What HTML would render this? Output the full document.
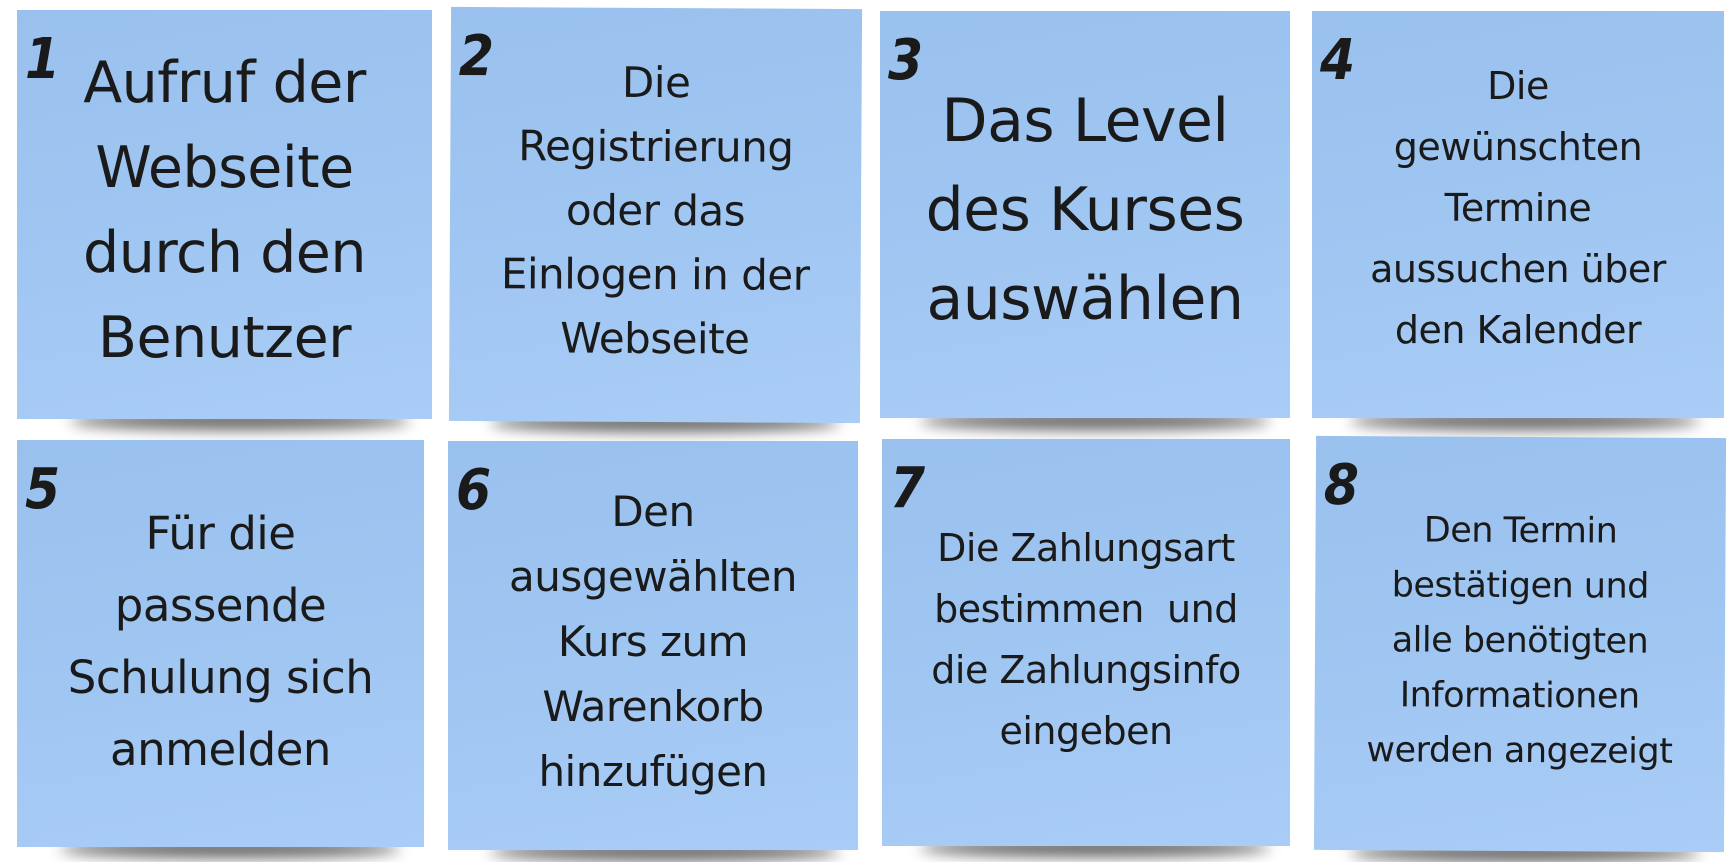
<!DOCTYPE html>
<html><head><meta charset="utf-8"><style>
html,body{margin:0;padding:0;background:#fff;width:1736px;height:862px;overflow:hidden;position:relative;font-family:"DejaVu Sans","Liberation Sans",sans-serif;color:#1a1a1a}
.s{position:absolute;height:18px;border-radius:50%;background:rgba(0,0,0,.6);filter:blur(7px)}
.n{position:absolute;background:linear-gradient(170deg,#9ac1ee 0%,#a0c6f2 55%,#a9cdf6 100%);}
.num{position:absolute;font-family:"DejaVu Sans",sans-serif;font-weight:bold;font-style:italic;font-size:56px;line-height:60px;left:8px;top:20px;transform:scaleX(.9);transform-origin:left}
.t{position:absolute;left:0;right:0;text-align:center;white-space:nowrap;letter-spacing:-0.5px}
</style></head><body>
<div class="s" style="left:70px;top:412px;width:340px"></div>
<div class="s" style="left:490px;top:414px;width:350px"></div>
<div class="s" style="left:920px;top:412px;width:350px"></div>
<div class="s" style="left:1350px;top:412px;width:350px"></div>
<div class="s" style="left:60px;top:840px;width:340px"></div>
<div class="s" style="left:490px;top:843px;width:350px"></div>
<div class="s" style="left:920px;top:839px;width:350px"></div>
<div class="s" style="left:1350px;top:844px;width:350px"></div>

<div class="n" style="left:17px;top:10px;width:415px;height:409px"><div class="num">1</div>
<div class="t" style="top:31px;font-size:57px;line-height:85px;left:0">Aufruf der<br>Webseite<br>durch den<br>Benutzer</div></div>
<div class="n" style="left:450px;top:8px;width:411px;height:414px;transform:rotate(0.3deg)"><div class="num">2</div>
<div class="t" style="top:43px;font-size:42px;line-height:64px;left:0">Die<br>Registrierung<br>oder das<br>Einlogen in der<br>Webseite</div></div>
<div class="n" style="left:880px;top:11px;width:410px;height:407px"><div class="num">3</div>
<div class="t" style="top:66px;font-size:60px;line-height:89px">Das Level<br>des Kurses<br>auswählen</div></div>
<div class="n" style="left:1312px;top:11px;width:412px;height:407px"><div class="num">4</div>
<div class="t" style="top:45px;font-size:38px;line-height:61px">Die<br>gewünschten<br>Termine<br>aussuchen über<br>den Kalender</div></div>
<div class="n" style="left:17px;top:440px;width:407px;height:407px"><div class="num">5</div>
<div class="t" style="top:58px;font-size:45px;line-height:72px">Für die<br>passende<br>Schulung sich<br>anmelden</div></div>
<div class="n" style="left:448px;top:441px;width:410px;height:409px"><div class="num">6</div>
<div class="t" style="top:38px;font-size:42px;line-height:65px">Den<br>ausgewählten<br>Kurs zum<br>Warenkorb<br>hinzufügen</div></div>
<div class="n" style="left:882px;top:439px;width:408px;height:407px"><div class="num">7</div>
<div class="t" style="top:79px;font-size:38px;line-height:61px">Die Zahlungsart<br>bestimmen&nbsp; und<br>die Zahlungsinfo<br>eingeben</div></div>
<div class="n" style="left:1315px;top:437px;width:410px;height:414px;transform:rotate(0.3deg)"><div class="num">8</div>
<div class="t" style="top:67px;font-size:35px;line-height:55px">Den Termin<br>bestätigen und<br>alle benötigten<br>Informationen<br>werden angezeigt</div></div>
</body></html>
